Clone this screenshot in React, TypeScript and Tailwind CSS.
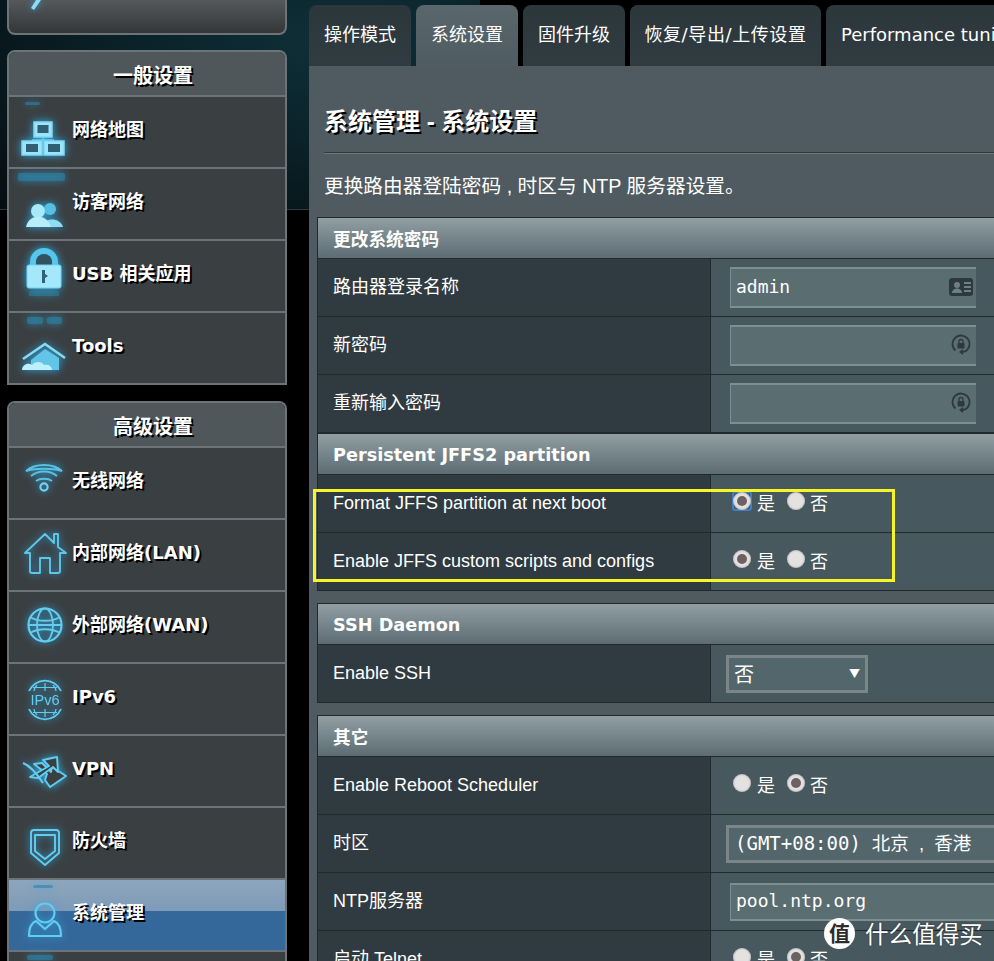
import React from "react";

const CJK = "font-['Liberation_Sans','Noto_Sans_CJK_SC',sans-serif]";
const glow = "absolute left-0 top-0 drop-shadow-[0_0_4px_#2fa8dc]";

function Svg({ children }: { children: React.ReactNode }) {
  return (
    <svg width="70" height="70" viewBox="0 0 70 70" className={glow} fill="none" stroke="#62cdf0" strokeWidth="2.2">
      {children}
    </svg>
  );
}
const Reflect = ({ x, y, w, h }: { x: number; y: number; w: number; h: number }) => (
  <rect x={x} y={y} width={w} height={h} rx="2" fill="#2b83a8" stroke="none" opacity="0.6" />
);

const icons: Record<string, React.ReactNode> = {
  net: (
    <Svg>
      <Reflect x={16} y={5} w={15} h={3} />
      <rect x="25" y="25" width="18" height="15" fill="#9fe3f8" stroke="#7fd8f4" strokeWidth="1.5" />
      <rect x="28.5" y="28" width="11" height="8" fill="#2f5f72" stroke="none" />
      <path d="M34 40v3M23 43h22" strokeWidth="1.6" />
      <rect x="13" y="44" width="20" height="14" fill="#9fe3f8" stroke="#7fd8f4" strokeWidth="1.5" />
      <rect x="35" y="44" width="20" height="14" fill="#9fe3f8" stroke="#7fd8f4" strokeWidth="1.5" />
      <rect x="17" y="47" width="12" height="8" fill="#2f5f72" stroke="none" />
      <rect x="39" y="47" width="12" height="8" fill="#2f5f72" stroke="none" />
    </Svg>
  ),
  guest: (
    <Svg>
      <Reflect x={9} y={4} w={47} h={8} />
      <circle cx="41" cy="40" r="6" fill="#56bfe6" stroke="none" />
      <path d="M33 58c2-10 18-10 21 0z" fill="#8fdcf5" stroke="none" />
      <circle cx="29" cy="42" r="7" fill="#a8e8fb" stroke="none" />
      <path d="M17 58c3-14 21-14 25 0z" fill="#b8eefc" stroke="none" />
    </Svg>
  ),
  lock: (
    <Svg>
      <path d="M21 26v-5a14 14 0 0 1 28 0v5h-6v-5a8 8 0 0 0-16 0v5z" fill="#55c6ec" stroke="none" />
      <path d="M27 24v-3a8 8 0 0 1 16 0v3z" fill="#33525f" stroke="none" />
      <rect x="18" y="24" width="34" height="23" rx="2" fill="#a5e7fb" stroke="#6fd5f4" strokeWidth="1" />
      <path d="M33 29h3v4l3 2-3 2v5h-3z" fill="#2f6278" stroke="none" />
      <rect x="20" y="50" width="30" height="5" fill="#2b83a8" stroke="none" opacity="0.5" />
    </Svg>
  ),
  tools: (
    <Svg>
      <Reflect x={18} y={4} w={16} h={7} />
      <Reflect x={38} y={4} w={15} h={7} />
      <path d="M22 47L36 36l14 9v12H22z" fill="#62c5e8" stroke="none" />
      <path d="M14 46L36 31l20 14" stroke="#86dcf6" strokeWidth="2.6" />
      <path d="M13 57c0-5 6-8 10-5 3-4 10-4 12 0 4-1 8 1 8 5z" fill="#bfeffc" stroke="none" />
    </Svg>
  ),
  wifi: (
    <Svg>
      <path d="M17 23c9-8 27-8 36 0-9-3-27-3-36 0zM22 28c7-6 19-6 26 0M27 33c4-3 12-3 16 0" stroke="#58c1e4" strokeWidth="2" />
      <circle cx="35" cy="39" r="3.6" stroke="#70d2f2" />
    </Svg>
  ),
  home: (
    <Svg>
      <path d="M16 33L36 14l9 9v-9h4v13l8 6h-6v18c0 1-1 2-2 2h-8V38H31v15h-8c-1 0-2-1-2-2V33z" strokeWidth="1.9" strokeLinejoin="round" stroke="#5fc6e8" />
    </Svg>
  ),
  globe: (
    <Svg>
      <circle cx="36" cy="33" r="16.5" />
      <ellipse cx="36" cy="33" rx="8" ry="16.5" strokeWidth="1.8" />
      <path d="M21 25c8 5 22 5 30 0M21 41c8-5 22-5 30 0M20 33h32" strokeWidth="1.8" />
    </Svg>
  ),
  ipv6: (
    <Svg>
      <path d="M20 27a17.500 17.500 0 0 1 32 0M20 45a17.500 17.500 0 0 0 32 0" strokeWidth="1.8" />
      <path d="M36 19v8M28 21c-2 2-3 4-3 6M44 21c2 2 3 4 3 6M28 51c-2-2-3-4-3-6M44 51c2-2 3-4 3-6M36 45v8M24 23.500h24M24 48.500h24" strokeWidth="1.2" />
      <text x="36" y="41" textAnchor="middle" fontFamily="Liberation Sans, sans-serif" fontSize="14.500" fill="#62cdf0" stroke="none">IPv6</text>
    </Svg>
  ),
  vpn: (
    <Svg>
      <path d="M25 28l13 10-2 6 5 7 16-11-14-9-1 5-9-9z" fill="#3a3f42" strokeWidth="1.9" strokeLinejoin="round" />
      <path d="M21 41l19-11-6-6 14-3 1 15-5-5-15 11z" fill="#3a3f42" strokeWidth="1.9" strokeLinejoin="round" />
      <path d="M14 27c8 3 14 11 20 20" strokeWidth="2.2" />
    </Svg>
  ),
  shield: (
    <Svg>
      <path d="M22 25c0-2 1-3 3-3h22c2 0 3 1 3 3v20L36 57 22 45z" strokeLinejoin="round" strokeWidth="1.9" />
      <path d="M26 27h20v16L36 51 26 43z" strokeLinejoin="round" strokeWidth="1.9" />
    </Svg>
  ),
  person: (
    <Svg>
      <Reflect x={24} y={5} w={20} h={3} />
      <circle cx="36" cy="33" r="9.500" />
      <path d="M27 41c-5 2-7 7-7 15h32c0-8-2-13-7-15l-9 8z" strokeLinejoin="round" />
    </Svg>
  ),
  tail: (
    <Svg>
      <Reflect x={18} y={3} w={26} h={5} />
    </Svg>
  ),
};

function NavRow({ icon, label, active }: { icon: string; label?: string; active?: boolean }) {
  return (
    <div
      className={`relative flex h-[72px] shrink-0 items-center border-t-2 border-[#6d7477] pb-[4px] pl-[63px] ${
        active ? "bg-[linear-gradient(#8ea6bc_0%,#7d9ab8_45%,#35689a_45%,#35689a_100%)]" : "bg-[#3a3f42]"
      }`}
    >
      {icons[icon]}
      {label && (
        <span className="relative font-['DejaVu_Sans','Noto_Sans_CJK_SC',sans-serif] text-[18px] leading-none font-bold text-white [text-shadow:2px_2px_0_#000]">
          {label}
        </span>
      )}
    </div>
  );
}

function NavPanel({ title, children, clip }: { title: string; children: React.ReactNode; clip?: boolean }) {
  return (
    <div className={`border-x-2 border-t-2 border-[#6d7477] ${clip ? "" : "border-b-2"} rounded-t-[8px] overflow-hidden`}>
      <div className="flex h-[43px] items-center justify-center bg-[#4f575b] pt-[5px] pl-[12px] font-['DejaVu_Sans','Noto_Sans_CJK_SC',sans-serif] text-[20px] font-bold text-white [text-shadow:2px_2px_0_#000]">
        {title}
      </div>
      {children}
    </div>
  );
}

const tabClass =
  "flex h-[61px] shrink-0 items-center justify-center rounded-t-[8px] pb-[3px] font-['DejaVu_Sans','Noto_Sans_CJK_SC',sans-serif] text-[18px] text-white";

function Tab({ children, active, w, left }: { children: React.ReactNode; active?: boolean; w: string; left?: boolean }) {
  return (
    <div
      className={`${tabClass} ${w} ${left ? "justify-start pl-[15px]" : ""} ${
        active ? "bg-[linear-gradient(#59666b,#4f5c61)]" : "bg-[linear-gradient(#2c373c,#303c41)]"
      }`}
    >
      {children}
    </div>
  );
}

function Section({ title, cjk, children }: { title: string; cjk?: boolean; children: React.ReactNode }) {
  return (
    <div className="w-[740px] border-x border-t border-[#22292c]">
      <div className={`flex h-[41px] items-center border-b border-[#22292c] bg-[linear-gradient(#919fa4,#5c6c72)] ${cjk ? "pt-[4px]" : "pt-[2px]"} pl-[15px] font-['DejaVu_Sans','Noto_Sans_CJK_SC',sans-serif] text-[17.7px] font-bold text-white`}>
        {title}
      </div>
      {children}
    </div>
  );
}

function Row({ label, children }: { label: string; children?: React.ReactNode }) {
  return (
    <div className="flex h-[58px] border-b border-[#22292c]">
      <div className={`flex w-[393px] shrink-0 items-center border-r border-[#22292c] bg-[#2f3b40] pl-[15px] ${CJK} text-[18px] text-white`}>
        {label}
      </div>
      <div className="flex flex-1 items-center bg-[#47585e]">{children}</div>
    </div>
  );
}

function Radio({ on, focus }: { on?: boolean; focus?: boolean }) {
  return (
    <span className={`relative flex h-[20px] w-[20px] -translate-y-[3px] items-center justify-center rounded-[3px] ${focus ? "border-2 border-[#3f7fc8]" : ""}`}>
      <span className="flex h-[18px] w-[18px] shrink-0 items-center justify-center rounded-full bg-[#e4e1e1] shadow-[inset_0_0_2px_#888]">
        {on && <span className="h-[10px] w-[10px] rounded-full bg-[#6b6261]" />}
      </span>
    </span>
  );
}

function YesNo({ yes, focus }: { yes?: boolean; focus?: boolean }) {
  const t = `font-['Noto_Sans_CJK_SC',sans-serif] text-[18px] leading-none text-white -translate-y-[2px]`;
  return (
    <div className="flex items-center pl-[21px]">
      <Radio on={yes} focus={focus} />
      <span className={`${t} ml-[5px]`}>是</span>
      <span className="ml-[11px]">
        <Radio on={!yes} />
      </span>
      <span className={`${t} ml-[4px]`}>否</span>
    </div>
  );
}

function TextBox({ value, icon, h = "h-[41px] pb-[2px]", w = "w-[246px]" }: { value?: string; icon?: React.ReactNode; h?: string; w?: string }) {
  return (
    <div className={`ml-[19px] flex ${h} ${w} items-center justify-between border-t-2 border-b-2 border-l border-[#7d8f94] bg-[#5a6e72] pr-[3px] pl-[5px] font-['DejaVu_Sans_Mono',monospace] text-[18px] text-white`}>
      <span>{value}</span>
      {icon}
    </div>
  );
}

const CardIcon = (
  <svg width="24" height="18" viewBox="0 0 24 18">
    <rect width="24" height="18" rx="3" fill="#2d393e" />
    <circle cx="8" cy="7" r="3" fill="#6d8185" />
    <path d="M3 15c0-6 10-6 10 0z" fill="#6d8185" />
    <path d="M15 5h7M15 9h7M15 13h7" stroke="#6d8185" strokeWidth="2" />
  </svg>
);
const KeyIcon = (
  <svg width="20" height="22" viewBox="0 0 20 22" fill="none" stroke="#2d393e" strokeWidth="1.8" className="mr-[2px]">
    <path d="M4.500 16.500A8.500 8.500 0 1 1 14 17.500L11 18" />
    <path d="M12 15v6l-4-3z" fill="#2d393e" stroke="none" />
    <rect x="6.500" y="9" width="7" height="5.500" rx="1" fill="#2d393e" stroke="none" />
    <path d="M8 9V7.500a2 2 0 0 1 4 0V9" strokeWidth="1.3" />
  </svg>
);

export default function App() {
  return (
    <div className="relative flex h-[961px] w-[994px] overflow-hidden bg-black">
      <div className="absolute top-0 left-0 h-[210px] w-[480px] border-b border-[#2b3a40] bg-[radial-gradient(ellipse_at_70%_20%,#0f3038_0%,#0a2128_45%,#060d11_100%)]" />

      <aside className="relative w-[309px] shrink-0 pl-[7px]">
        <div className="w-[280px]">
          <div className="relative h-[35px] overflow-hidden rounded-b-[8px] border-x-2 border-b-2 border-[#6d7477] bg-[linear-gradient(#55595b,#343638)]">
            <svg width="24" height="14" viewBox="0 0 24 14" className="absolute top-0 left-[16px] drop-shadow-[0_0_3px_#2fa8dc]">
              <path d="M16 0L9 10l-3-2 5-8z" fill="#8fdcf5" />
            </svg>
          </div>
          <div className="mt-[15px]">
            <NavPanel title="一般设置">
              <NavRow icon="net" label="网络地图" />
              <NavRow icon="guest" label="访客网络" />
              <NavRow icon="lock" label="USB 相关应用" />
              <NavRow icon="tools" label="Tools" />
            </NavPanel>
          </div>
          <div className="mt-[16px]">
            <NavPanel title="高级设置" clip>
              <NavRow icon="wifi" label="无线网络" />
              <NavRow icon="home" label="内部网络(LAN)" />
              <NavRow icon="globe" label="外部网络(WAN)" />
              <NavRow icon="ipv6" label="IPv6" />
              <NavRow icon="vpn" label="VPN" />
              <NavRow icon="shield" label="防火墙" />
              <NavRow icon="person" label="系统管理" active />
              <NavRow icon="tail" />
            </NavPanel>
          </div>
        </div>
      </aside>

      <main className="relative min-w-0 flex-1 pt-[5px]">
        <div className="flex gap-[5px]">
          <Tab w="w-[102px]">操作模式</Tab>
          <Tab w="w-[102px]" active>系统设置</Tab>
          <Tab w="w-[102px]">固件升级</Tab>
          <Tab w="w-[191px] tracking-[0.6px]">恢复/导出/上传设置</Tab>
          <Tab w="w-[300px]" left>Performance tuning</Tab>
        </div>
        <div className="h-[900px] w-[760px] bg-[#4f5b60] pl-[8px]">
          <h1 className="ml-[7px] pt-[36px] font-['Liberation_Sans','Noto_Sans_CJK_SC',sans-serif] text-[24px] leading-[40px] font-bold text-white [text-shadow:2px_2px_0_#000]">
            系统管理 - 系统设置
          </h1>
          <div className="mt-[10px] ml-[7px] h-px bg-[#2e393d] shadow-[0_1px_0_#6b777b]" />
          <p className={`mt-[20px] ml-[7px] ${CJK} text-[19.7px] leading-[26px] text-white`}>
            更换路由器登陆密码 , 时区与 NTP 服务器设置。
          </p>
          <div className="mt-[18px]">
            <Section title="更改系统密码" cjk>
              <Row label="路由器登录名称"><TextBox value="admin" icon={CardIcon} /></Row>
              <Row label="新密码"><TextBox icon={KeyIcon} /></Row>
              <Row label="重新输入密码"><TextBox icon={KeyIcon} /></Row>
            </Section>
          </div>
          <Section title="Persistent JFFS2 partition">
            <Row label="Format JFFS partition at next boot"><YesNo yes focus /></Row>
            <Row label="Enable JFFS custom scripts and configs"><YesNo yes /></Row>
          </Section>
          <div className="mt-[12px]">
            <Section title="SSH Daemon">
              <Row label="Enable SSH">
                <div className="ml-[15px] flex h-[38px] w-[142px] items-center justify-between border-[3px] border-[#7c8689] bg-[#53666c] pr-[5px] pl-[5px] font-['Noto_Sans_CJK_SC',sans-serif] text-[20px] text-white">
                  <span>否</span>
                  <span className="text-[11px]">▼</span>
                </div>
              </Row>
            </Section>
          </div>
          <div className="mt-[12px]">
            <Section title="其它" cjk>
              <Row label="Enable Reboot Scheduler"><YesNo /></Row>
              <Row label="时区">
                <div className="ml-[15px] flex h-[38px] w-[300px] items-center border-[3px] border-[#7c8689] bg-[#53666c] pl-[6px] font-['DejaVu_Sans_Mono','Noto_Sans_CJK_SC',monospace] text-[19px] whitespace-nowrap text-white">
                  <span>(GMT+08:00)</span>
                  <span className="ml-[11px] font-['Liberation_Sans','Noto_Sans_CJK_SC',sans-serif] text-[18.5px] [word-spacing:5px]">北京 , 香港</span>
                </div>
              </Row>
              <Row label="NTP服务器"><TextBox value="pool.ntp.org" h="h-[38px] pb-[2px]" w="w-[300px]" /></Row>
              <Row label="启动 Telnet"><YesNo /></Row>
            </Section>
          </div>
        </div>
      </main>

      <div className="pointer-events-none absolute top-[489px] left-[313px] h-[93px] w-[582px] border-[3px] border-[#f5f52a]" />

      <div className="absolute top-[917px] left-[824px] flex items-center gap-[10px]">
        <span className="flex h-[31px] w-[31px] items-center justify-center rounded-full bg-white font-['Noto_Sans_CJK_SC',sans-serif] text-[21px] font-bold text-[#2c2c2c]">值</span>
        <span className="font-['Noto_Sans_CJK_SC',sans-serif] text-[23.6px] leading-[32px] text-white [text-shadow:0_0_2px_#0006]">什么值得买</span>
      </div>
    </div>
  );
}
